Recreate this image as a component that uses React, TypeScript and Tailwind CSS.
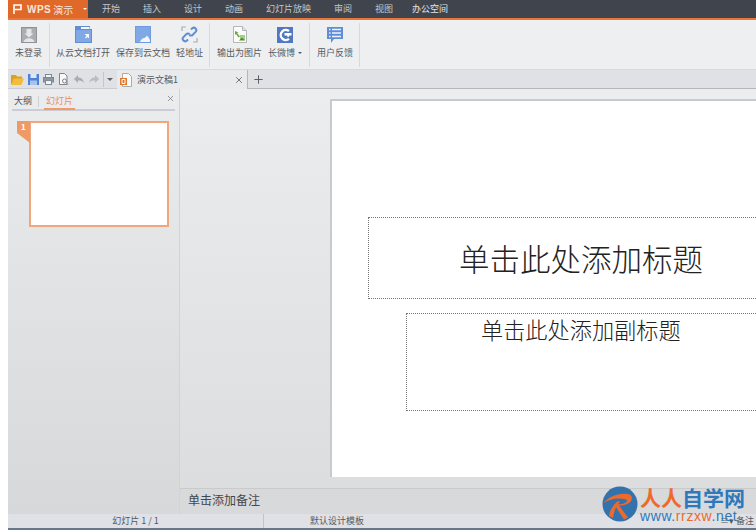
import type { ReactNode } from 'react';
import { Plus, X } from 'lucide-react';

const cjk = "font-['Noto_Sans_CJK_SC','Noto_Sans',sans-serif]";

const menus = ['开始', '插入', '设计', '动画', '幻灯片放映', '审阅', '视图'];

function LoginIcon() {
  return (
    <svg width="16" height="16" viewBox="0 0 16 16">
      <rect width="16" height="16" fill="#8f9398" />
      <rect x="1" y="1" width="14" height="14" fill="#aaaeb3" />
      <path d="M5.500 2h5v4.500h2L8 10.500 3.500 6.500h2z" fill="#e4e6e8" />
      <path d="M2.500 15c.5-2.500 2.600-3.800 5.500-3.800s5 1.300 5.500 3.800z" fill="#e4e6e8" />
    </svg>
  );
}

function OpenCloudIcon() {
  return (
    <svg width="17" height="17" viewBox="0 0 17 17">
      <path d="M0 0h15v3h2v14H0z" fill="#5f8ed6" />
      <rect x="6" y="1" width="8.500" height="2" fill="#f4f6fa" />
      <rect x="1" y="4" width="15" height="12" fill="#7fa8e4" />
      <path d="M9.500 8h4.500v4.500l-1.500-1.500-1.500 1.500-1-1 1.500-1.500z" fill="#f4f6fa" />
    </svg>
  );
}

function SaveCloudIcon() {
  return (
    <svg width="16" height="17" viewBox="0 0 16 17">
      <rect width="16" height="17" fill="#6c9be0" />
      <rect x="1" y="1" width="14" height="15" fill="#7fa8e4" />
      <path d="M5 16c1-2.500 2.500-4 4.500-4 .8 0 1.200-2 2.500-2s2 2.500 3 4v2z" fill="#f2f5fb" />
    </svg>
  );
}

function LinkIcon() {
  return (
    <svg width="17" height="17" viewBox="0 0 17 17" fill="none">
      <path d="M10 3.500l1.300-1.300a2.500 2.500 0 0 1 3.500 3.500l-3 3a2.500 2.500 0 0 1-3.500 0" stroke="#5f8ed6" strokeWidth="2" />
      <path d="M7 13.500l-1.300 1.300a2.500 2.500 0 0 1-3.500-3.500l3-3a2.500 2.500 0 0 1 3.500 0" stroke="#5f8ed6" strokeWidth="2" />
      <path d="M1 5V1h4M16 12v4h-4" stroke="#a9adb4" strokeWidth="1.200" />
    </svg>
  );
}

function ExportIcon() {
  return (
    <svg width="16" height="17" viewBox="0 0 16 17">
      <path d="M1.500.5h9l4 4v12h-13z" fill="#fbfbfb" stroke="#b4b6ba" />
      <path d="M10.500.5v4h4" fill="#e2e3e5" stroke="#b4b6ba" />
      <path d="M3 5l3.500 1.500L5 7l3 3.500-1.500 1L4 8l-1 1z" fill="#6aa63f" />
      <rect x="8" y="9" width="5" height="5" fill="#a6cf86" />
      <path d="M7 14.500l3-3 3 3z" fill="#4e8d2a" />
    </svg>
  );
}

function WeiboIcon() {
  return (
    <svg width="16" height="16" viewBox="0 0 16 16">
      <rect width="16" height="16" fill="#5378c2" />
      <path d="M12 4.200A5 5 0 1 0 12 11.800" fill="none" stroke="#fff" strokeWidth="2.400" />
      <path d="M7.500 6h7v2.500h-2L11 10.500 10 8.500H7.500z" fill="#fff" />
    </svg>
  );
}

function FeedbackIcon() {
  return (
    <svg width="16" height="16" viewBox="0 0 16 16">
      <path d="M0 0h16v12H7l-3 4v-4H0z" fill="#5f8ed6" />
      <path d="M2 2.500h1.500M5 2.500h9M2 6h1.500M5 6h9M2 9.500h1.500M5 9.500h9" stroke="#eef3fb" strokeWidth="1.300" />
    </svg>
  );
}

function RibbonButton({ icon, label, arrow }: { icon: ReactNode; label: string; arrow?: boolean }) {
  return (
    <div className="flex flex-col items-center">
      <div className="flex h-[23px] items-center">{icon}</div>
      <div className="flex items-center whitespace-nowrap text-[9px] leading-[14px] text-[#555a60]">
        {label}
        {arrow && <span className="ml-[3px] h-0 w-0 border-x-[2px] border-t-[2px] border-x-transparent border-t-[#555a60]" />}
      </div>
    </div>
  );
}

function QuickIcons() {
  return (
    <div className="flex items-center gap-[4px]">
      <svg width="13" height="11" viewBox="0 0 13 11">
        <path d="M0 1h5l1 1.500h5V5H3L1 10H0z" fill="#d9a21f" />
        <path d="M3 4.500h10L10.500 11H0z" fill="#f2bd3c" />
      </svg>
      <svg width="11" height="11" viewBox="0 0 11 11">
        <rect width="11" height="11" fill="#4f82d6" />
        <rect x="2.500" width="6" height="4" fill="#dfe8f6" />
        <rect x="2" y="6.500" width="7" height="4.500" fill="#a9c3ec" />
      </svg>
      <svg width="11" height="11" viewBox="0 0 11 11">
        <rect x="2.500" y="0.500" width="6" height="3" fill="#f4f4f4" stroke="#7d8894" />
        <rect x="0.500" y="3.500" width="10" height="4.500" fill="#8a98a8" stroke="#7d8894" />
        <rect x="2.500" y="6.500" width="6" height="4" fill="#f4f4f4" stroke="#7d8894" />
      </svg>
      <svg width="11" height="12" viewBox="0 0 11 12">
        <path d="M1.500.5h5l2.500 2.500v8.500h-7.500z" fill="#f8f8f8" stroke="#80838a" />
        <circle cx="6.500" cy="8" r="2" fill="none" stroke="#80838a" />
        <path d="M8 9.500l2 2" stroke="#80838a" />
      </svg>
      <svg width="10" height="9" viewBox="0 0 10 9" className="ml-[1px]">
        <path d="M4 0v2.500c3.500 0 5.500 2 6 5.500C8.500 6 7 5.500 4 5.500V8L0 4z" fill="#a9acb2" />
      </svg>
      <svg width="10" height="9" viewBox="0 0 10 9" className="ml-[1px]">
        <path d="M6 0v2.500C2.500 2.500.5 4.500 0 8c1.500-2 3-2.500 6-2.500V8l4-4z" fill="#b9bcc1" />
      </svg>
    </div>
  );
}

function SlideFileIcon() {
  return (
    <svg width="12" height="14" viewBox="0 0 12 14">
      <path d="M2.500.5h6l3 3v10h-9z" fill="#fafafa" stroke="#a9abaf" />
      <rect x="0" y="5" width="7" height="7" fill="#e0792f" />
      <path d="M2 6.500h3v4H2z" fill="none" stroke="#fff" />
    </svg>
  );
}

function Watermark() {
  return (
    <div className="absolute bottom-[8px] left-[602px] flex items-center gap-[2px]">
      <svg width="36" height="36" viewBox="0 0 36 36">
        <circle cx="18" cy="18" r="17.500" fill="#3472ad" />
        <path d="M1.500 17C7 10 17 6.500 26 8c5 1 5 6.500 1 9-3 2-7 2.500-10 2.500l9 12-4 2-10-15.500c4 .5 9 .5 12-1.500 2-1.500 1-3-2-3.500C15 11.500 8 13 1.500 17z" fill="#ee6a2c" />
        <path d="M7 30c1-6 4-11 9-15l2 1c-4 4-6 9-7 16z" fill="#ee6a2c" />
      </svg>
      <div className="flex flex-col">
        <div className="flex h-[22px] items-center text-[21px] font-bold leading-none">
          <span className="text-[#ee6a2c]">人人</span>
          <span className="text-[#2f78bb]">自学网</span>
        </div>
        <div className="mt-[1px] font-['Liberation_Sans',sans-serif] text-[14px] leading-[12px] tracking-[0.600px] text-[#2f78bb]">
          www.<span className="text-[#ee6a2c]">rrzxw</span>.net
        </div>
      </div>
    </div>
  );
}

export default function App() {
  return (
    <div className={`relative flex h-[530px] w-[756px] flex-col overflow-hidden bg-white pl-2 ${cjk}`}>
      <div className="flex h-[20px] shrink-0 border-b-2 border-[#e8753a] bg-[#3f444d]">
        <div className="flex w-[80px] items-center bg-[#e0692a] pl-[5px] text-[10px] text-[#f8e6da]">
          <svg width="9" height="10" viewBox="0 0 9 10" fill="none">
            <path d="M1 10V1h7v4.500H2" stroke="#fff" strokeWidth="1.600" />
          </svg>
          <span className="ml-[5px] font-['Liberation_Sans',sans-serif] font-bold tracking-[0.500px]">WPS</span>
          <span className="ml-[2px]">演示</span>
          <span className="ml-[10px] h-0 w-0 border-x-[2px] border-t-[2px] border-x-transparent border-t-white" />
        </div>
        <div className="ml-[14px] flex gap-[23px] text-[9px] leading-[18px] text-[#c4c7cb]">
          {menus.map((m) => (
            <span key={m}>{m}</span>
          ))}
        </div>
        <div className="ml-[15px] -mb-[2px] w-[44px] border-b-2 border-[#e8753a] text-center text-[9px] leading-[18px] text-[#e4e5e7]">
          办公空间
        </div>
      </div>

      <div className="flex h-[50px] shrink-0 items-stretch border-b border-[#d9dadd] bg-[#eeeff1] pt-[3px]">
        <div className="flex h-[44px] border-r border-[#d8d9dc] pl-[7px] pr-[7px]">
          <RibbonButton icon={<LoginIcon />} label="未登录" />
        </div>
        <div className="flex h-[44px] gap-[6px] border-r border-[#d8d9dc] pl-[6px] pr-[6px]">
          <RibbonButton icon={<OpenCloudIcon />} label="从云文档打开" />
          <RibbonButton icon={<SaveCloudIcon />} label="保存到云文档" />
          <RibbonButton icon={<LinkIcon />} label="轻地址" />
        </div>
        <div className="flex h-[44px] gap-[6px] border-r border-[#d8d9dc] pl-[7px] pr-[7px]">
          <RibbonButton icon={<ExportIcon />} label="输出为图片" />
          <RibbonButton icon={<WeiboIcon />} label="长微博" arrow />
        </div>
        <div className="flex h-[44px] border-r border-[#d8d9dc] pl-[7px] pr-[6px]">
          <RibbonButton icon={<FeedbackIcon />} label="用户反馈" />
        </div>
      </div>

      <div className="flex h-[19px] shrink-0 items-center bg-[#dfe1e5]">
        <div className="flex h-full w-[109px] items-center border-b border-[#c9cbd0] pl-[3px]">
          <QuickIcons />
          <div className="ml-[4px] flex h-[15px] items-center border-l border-[#c4c6cb] pl-[3px]">
            <span className="h-0 w-0 border-x-[3px] border-t-[3px] border-x-transparent border-t-[#62666c]" />
          </div>
        </div>
        <div className="flex h-full w-[131px] items-center border-r border-[#b4b6bb] bg-[#e9eaec] pl-[3px] text-[9px] text-[#555a60]">
          <SlideFileIcon />
          <span className="ml-[5px]">演示文稿1</span>
          <X size={10} strokeWidth={2} color="#5b5e64" className="ml-[56px]" />
        </div>
        <div className="flex h-full flex-1 items-center border-b border-[#b4b6bb] pl-[4px]">
          <Plus size={13} strokeWidth={1.800} color="#595d63" />
        </div>
      </div>

      <div className="flex min-h-0 flex-1">
        <aside className="flex w-[172px] shrink-0 flex-col border-r border-[#d2d3d6] bg-gradient-to-b from-[#ebecee] to-[#d7d8da]">
          <div className="relative mx-[4px] mt-[1px] flex h-[21px] items-center border-b-2 border-[#cbccd5] pt-[3px] text-[9px]">
            <span className="ml-[2px] text-[#4d5056]">大纲</span>
            <span className="ml-[6px] h-[11px] w-px bg-[#cfd0d3]" />
            <span className="-mb-[2px] ml-[5px] flex h-full w-[31px] items-center justify-center border-b-2 border-[#ef9a68] text-[#ea8f59]">
              幻灯片
            </span>
            <X size={9} strokeWidth={2} color="#797c82" className="absolute right-[0px] top-[4px]" />
          </div>
          <div className="relative ml-[21px] mt-[10px] h-[106px] w-[140px] border-2 border-[#f0a77c] bg-white">
            <div className="absolute -left-[14px] -top-[2px] h-[22px] w-[13px] bg-[#ee9a66] pl-[4px] text-[8px] font-bold leading-[11px] text-white [clip-path:polygon(0_0,100%_0,100%_100%,0_55%)]">
              1
            </div>
          </div>
        </aside>

        <main className="flex min-w-0 flex-1 flex-col">
          <div className="flex min-h-0 flex-1 bg-gradient-to-b from-[#ecedef] to-[#dcddde] pl-[150px] pt-[10px]">
            <div className="h-[378px] w-[440px] shrink-0 border-l-2 border-t-2 border-[#c9cacd] bg-white pl-[36px] pt-[116px] text-[#222]">
              <div className="flex h-[82px] w-[420px] items-center border border-dotted border-[#777] pl-[90px] text-[30.500px] font-light leading-none">
                单击此处添加标题
              </div>
              <div className="ml-[38px] mt-[14px] h-[98px] w-[380px] border border-dotted border-[#777] pl-[74px] text-[22.200px] font-light leading-[30px]">
                单击此处添加副标题
              </div>
            </div>
          </div>
          <div className="h-[26px] shrink-0 border-t border-[#c9cacc] bg-[#d8d9db] pl-[8px] text-[12px] leading-[22px] text-[#44474c]">
            单击添加备注
          </div>
        </main>
      </div>

      <div className="flex h-[16px] shrink-0 border-b-2 border-[#68768c] bg-[#dfe1e6] text-[9px] leading-[14px] text-[#55585e]">
        <div className="w-[256px] border-r border-[#c1c3c8] text-center">幻灯片 1 / 1</div>
        <div className="w-[146px] text-center">默认设计模板</div>
        <div className="flex-1 pr-[2px] text-right">≡▾ 备注</div>
      </div>

      <Watermark />
    </div>
  );
}
